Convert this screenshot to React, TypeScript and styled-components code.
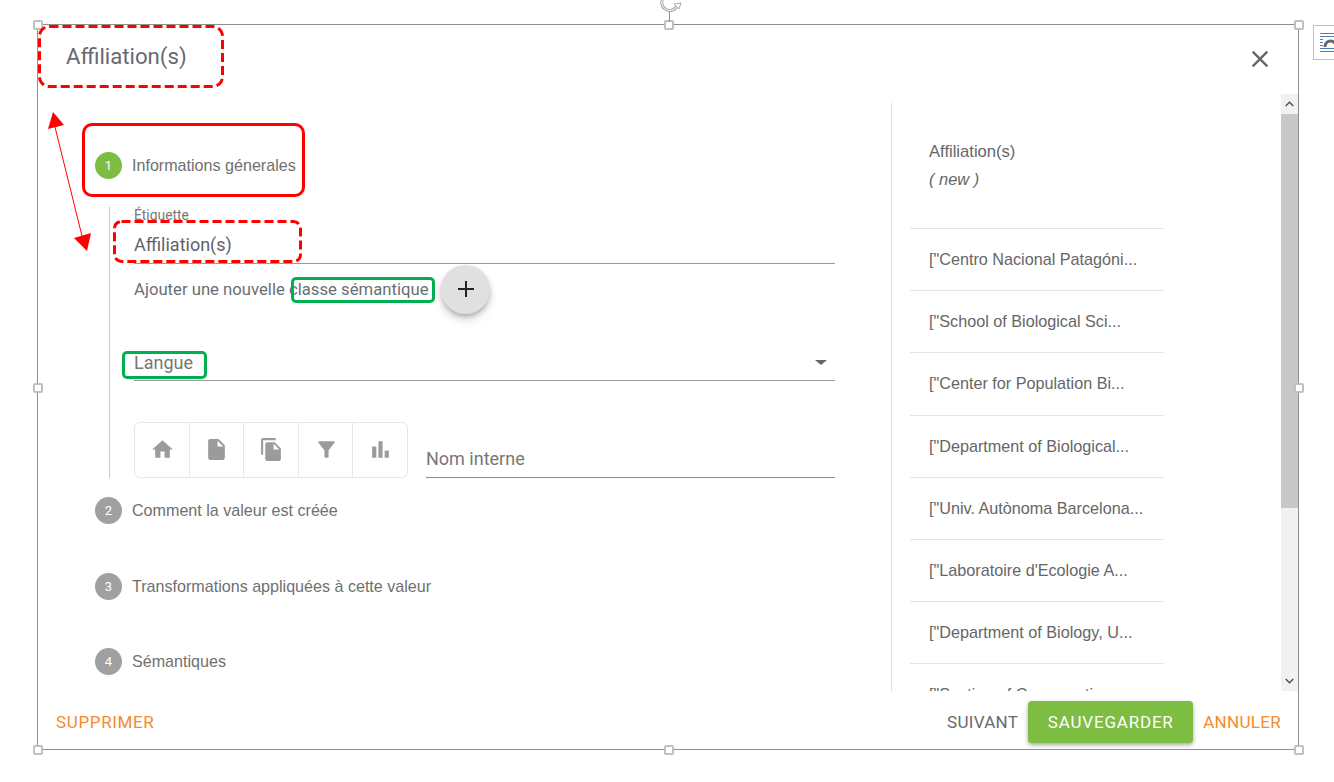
import React from 'react';
import { MdBarChart, MdClose, MdFileCopy, MdFilterAlt, MdHome, MdInsertDriveFile, MdKeyboardArrowDown, MdKeyboardArrowUp } from 'react-icons/md';
import styled, { createGlobalStyle } from 'styled-components';

const GlobalStyle = createGlobalStyle`
  html, body {
    margin: 0;
    background: #fff;
    overflow: hidden;
  }
  * {
    box-sizing: border-box;
  }
`;

const Page = styled.div`
  position: relative;
  width: 1334px;
  height: 782px;
  padding: 24px 0 0 37px;
  overflow: hidden;
  font-family: Roboto, "Liberation Sans", sans-serif;
  color: #666;
`;

const Frame = styled.div`
  position: relative;
  display: flex;
  flex-direction: column;
  width: 1262px;
  height: 726px;
  border: 1px solid #8e8e8e;
`;

const Header = styled.header`
  display: flex;
  justify-content: space-between;
  align-items: center;
  height: 69px;
  padding: 0 24px 8px 28px;
`;

const Title = styled.h2`
  margin: 0;
  font-size: 22.2px;
  font-weight: 400;
  color: #666a70;
`;

const CloseButton = styled.span`
  display: flex;
  margin-top: 7px;
  font-size: 28px;
  color: #666;
`;

const Body = styled.div`
  flex: 1;
  display: flex;
  min-height: 0;
  overflow: hidden;
`;

const Form = styled.div`
  width: 853px;
  flex-shrink: 0;
  padding: 58px 56px 0 57px;
`;

const Step = styled.div<{ $top?: number }>`
  display: flex;
  align-items: center;
  gap: 10px;
  height: 27px;
  margin-top: ${p => p.$top ?? 0}px;
  font-family: "Liberation Sans", Arial, sans-serif;
  font-size: 16.1px;
  color: #707070;
`;

const StepNumber = styled.span<{ $active?: boolean }>`
  display: flex;
  justify-content: center;
  align-items: center;
  width: 27px;
  height: 27px;
  border-radius: 50%;
  background: ${p => (p.$active ? '#7cbd42' : '#a0a0a0')};
  color: #fff;
  font-family: Roboto, sans-serif;
  font-size: 13px;
`;

const StepContent = styled.div`
  margin: 28px 0 0 14px;
  padding-left: 24px;
  border-left: 1px solid #c8c8c8;
`;

const TextField = styled.div`
  position: relative;
  height: 57px;
  border-bottom: 1px solid #9a9a9a;
`;

const FieldLabel = styled.label`
  display: block;
  font-size: 13.8px;
  line-height: 16px;
  color: #777;
`;

const FieldValue = styled.div`
  margin-top: 10px;
  font-size: 18px;
  line-height: 24px;
  color: #5f6368;
`;

const AddRow = styled.div`
  display: flex;
  align-items: center;
  gap: 13px;
  height: 50px;
  font-size: 16.7px;
  color: #6b6f75;
`;

const AddButton = styled.button`
  display: flex;
  justify-content: center;
  align-items: center;
  width: 49px;
  height: 49px;
  padding: 0;
  border: 0;
  border-radius: 50%;
  background: #e0e0e0;
  box-shadow: 0 3px 5px -1px rgba(0, 0, 0, 0.25), 0 6px 10px rgba(0, 0, 0, 0.14);
  color: #222;
`;

const SelectField = styled.div`
  display: flex;
  justify-content: space-between;
  align-items: center;
  height: 67px;
  padding-top: 31px;
  border-bottom: 1px solid #9a9a9a;
  font-size: 18px;
  color: #777;
`;

const SelectArrow = styled.span`
  width: 0;
  height: 0;
  margin-right: 8px;
  border-left: 6px solid transparent;
  border-right: 6px solid transparent;
  border-top: 5px solid #666;
`;

const ToolRow = styled.div`
  display: flex;
  gap: 18px;
  margin-top: 41px;
`;

const ToolGroup = styled.div`
  display: flex;
  width: 274px;
  height: 56px;
  border: 1px solid #e6e6e6;
  border-radius: 6px;
`;

const ToolCell = styled.span`
  flex: 1;
  display: flex;
  justify-content: center;
  align-items: center;
  padding: 0 0 2px 1px;
  font-size: 25px;
  color: #9b9b9b;

  & + & {
    border-left: 1px solid #e6e6e6;
  }
`;

const InternalName = styled.div`
  flex: 1;
  display: flex;
  align-items: flex-end;
  padding-bottom: 8px;
  border-bottom: 1px solid #8a8a8a;
  font-size: 18px;
  color: #777;
`;

const Preview = styled.aside`
  width: 390px;
  flex-shrink: 0;
  margin-top: 9px;
  padding-left: 18px;
  border-left: 1px solid #e0e0e0;
  font-family: "Liberation Sans", Arial, sans-serif;
`;

const PreviewHead = styled.div`
  width: 254px;
  height: 125px;
  padding: 35px 0 0 19px;
  font-size: 16.6px;
  line-height: 28px;
  color: #666;
`;

const PreviewNew = styled.div`
  margin-top: -1px;
  font-size: 16.4px;
  font-style: italic;
`;

const PreviewRow = styled.div`
  display: flex;
  align-items: center;
  width: 254px;
  height: 62.2px;
  padding-left: 19px;
  border-top: 1px solid #e4e4e4;
  font-size: 16.2px;
  color: #666;
  white-space: nowrap;
`;

const Scrollbar = styled.div`
  display: flex;
  flex-direction: column;
  width: 17px;
  flex-shrink: 0;
  background: #f1f1f1;
`;

const ScrollArrow = styled.span`
  display: flex;
  justify-content: center;
  align-items: center;
  height: 20px;
  font-size: 22px;
  color: #505050;
`;

const ScrollThumb = styled.div`
  height: 394px;
  background: #c8c8c8;
`;

const ScrollSpace = styled.div`
  flex: 1;
`;

const Footer = styled.footer`
  display: flex;
  align-items: flex-start;
  height: 58px;
  padding: 10px 17px 0 18px;
`;

const TextButton = styled.span<{ $accent?: boolean; $tight?: boolean }>`
  display: flex;
  align-items: center;
  height: 42px;
  font-size: 17px;
  letter-spacing: ${p => (p.$tight ? 0.3 : 0.65)}px;
  color: ${p => (p.$accent ? '#f58a2e' : '#666a70')};
`;

const FooterActions = styled.div`
  display: flex;
  align-items: flex-start;
  gap: 10px;
  margin-left: auto;
`;

const SaveButton = styled.button`
  width: 165px;
  height: 42px;
  padding: 0;
  border: 0;
  border-radius: 4px;
  background: #7cbd42;
  box-shadow: 0 2px 4px rgba(0, 0, 0, 0.35);
  color: #fff;
  font-family: inherit;
  font-size: 17px;
  letter-spacing: 0.8px;
`;

const Handle = styled.span<{ $x: number; $y: number }>`
  position: absolute;
  left: calc(${p => p.$x}% + ${p => p.$x / 100}px);
  top: calc(${p => p.$y}% + ${p => p.$y / 100}px);
  width: 10px;
  height: 10px;
  margin: -5px 0 0 -5px;
  border: 2px solid #c0c0c0;
  border-radius: 2px;
  background: #fff;
`;

const Callout = styled.div`
  position: absolute;
  border: 3px solid #ff0000;
  border-radius: 10px;
  pointer-events: none;
`;

const StepCallout = styled(Callout)`
  left: 82px;
  top: 123px;
  width: 223px;
  height: 74px;
`;

const GreenCallout = styled(Callout)`
  border-color: #00b050;
  border-radius: 5px;
`;

const ClassCallout = styled(GreenCallout)`
  left: 291px;
  top: 277px;
  width: 144px;
  height: 26px;
`;

const LangCallout = styled(GreenCallout)`
  left: 122px;
  top: 351px;
  width: 85px;
  height: 28px;
`;

const DashedOutline = styled.svg<{ $left: number; $top: number }>`
  position: absolute;
  left: ${p => p.$left}px;
  top: ${p => p.$top}px;
  pointer-events: none;
`;

const ArrowLayer = styled.svg`
  position: absolute;
  left: 40px;
  top: 105px;
`;

const RotateIcon = styled.svg`
  position: absolute;
  left: 655px;
  top: 0;
`;

const LayoutBadge = styled.div`
  position: absolute;
  left: 1313px;
  top: 25px;
  width: 40px;
  height: 35px;
  border: 1px solid #c0c0c0;
  background: #fff;
`;

const steps = [
  { n: 2, label: 'Comment la valeur est créée', top: 19 },
  { n: 3, label: 'Transformations appliquées à cette valeur', top: 49 },
  { n: 4, label: 'Sémantiques', top: 48 }
];

const rows = [
  '["Centro Nacional Patagóni...',
  '["School of Biological Sci...',
  '["Center for Population Bi...',
  '["Department of Biological...',
  '["Univ. Autònoma Barcelona...',
  '["Laboratoire d\'Ecologie A...',
  '["Department of Biology, U...',
  '["Section of Conservati...'
];

const handles = [
  [0, 0], [50, 0], [100, 0],
  [0, 50], [100, 50],
  [0, 100], [50, 100], [100, 100]
];

const Dashed = ({ left, top, width, height, radius }: { left: number; top: number; width: number; height: number; radius: number }) => (
  <DashedOutline $left={left} $top={top} width={width} height={height}>
    <rect
      x="1.5"
      y="1.5"
      width={width - 3}
      height={height - 3}
      rx={radius}
      fill="none"
      stroke="#ff0000"
      strokeWidth="3"
      strokeDasharray="9 4"
    />
  </DashedOutline>
);

const App = () => (
  <Page>
    <GlobalStyle />
    <Frame>
      <Header>
        <Title>Affiliation(s)</Title>
        <CloseButton><MdClose /></CloseButton>
      </Header>
      <Body>
        <Form>
          <Step>
            <StepNumber $active>1</StepNumber>
            Informations génerales
          </Step>
          <StepContent>
            <TextField>
              <FieldLabel>Étiquette</FieldLabel>
              <FieldValue>Affiliation(s)</FieldValue>
            </TextField>
            <AddRow>
              <span>Ajouter une nouvelle classe sémantique</span>
              <AddButton>
                <svg width="18" height="18" viewBox="0 0 18 18">
                  <path d="M9 1v16M1 9h16" stroke="currentColor" strokeWidth="2" />
                </svg>
              </AddButton>
            </AddRow>
            <SelectField>
              Langue
              <SelectArrow />
            </SelectField>
            <ToolRow>
              <ToolGroup>
                <ToolCell><MdHome /></ToolCell>
                <ToolCell><MdInsertDriveFile /></ToolCell>
                <ToolCell><MdFileCopy /></ToolCell>
                <ToolCell><MdFilterAlt /></ToolCell>
                <ToolCell><MdBarChart /></ToolCell>
              </ToolGroup>
              <InternalName>Nom interne</InternalName>
            </ToolRow>
          </StepContent>
          {steps.map(s => (
            <Step key={s.n} $top={s.top}>
              <StepNumber>{s.n}</StepNumber>
              {s.label}
            </Step>
          ))}
        </Form>
        <Preview>
          <PreviewHead>
            Affiliation(s)
            <PreviewNew>( new )</PreviewNew>
          </PreviewHead>
          {rows.map(r => (
            <PreviewRow key={r}>{r}</PreviewRow>
          ))}
        </Preview>
        <Scrollbar>
          <ScrollArrow><MdKeyboardArrowUp /></ScrollArrow>
          <ScrollThumb />
          <ScrollSpace />
          <ScrollArrow><MdKeyboardArrowDown /></ScrollArrow>
        </Scrollbar>
      </Body>
      <Footer>
        <TextButton $accent>SUPPRIMER</TextButton>
        <FooterActions>
          <TextButton $tight>SUIVANT</TextButton>
          <SaveButton>SAUVEGARDER</SaveButton>
          <TextButton $accent $tight>ANNULER</TextButton>
        </FooterActions>
      </Footer>
      {handles.map(([x, y]) => (
        <Handle key={`${x}-${y}`} $x={x} $y={y} />
      ))}
    </Frame>
    <Dashed left={38} top={25} width={186} height={63} radius={10} />
    <Dashed left={113} top={220} width={189} height={43} radius={7} />
    <StepCallout />
    <ClassCallout />
    <LangCallout />
    <ArrowLayer width="60" height="150" viewBox="0 0 60 150">
      <path d="M15 22L42 131" stroke="#ff0000" strokeWidth="1" />
      <path d="M13 7L8 24L24 20Z" fill="#ff0000" />
      <path d="M47 146L34 133L51 128Z" fill="#ff0000" />
    </ArrowLayer>
    <RotateIcon width="30" height="26" viewBox="0 0 30 26">
      <path d="M14.5 12V22" stroke="#909090" strokeWidth="1" />
      <path d="M9 -3A8 8 0 1 0 22 6" fill="none" stroke="#aaa" strokeWidth="3" />
      <path d="M9 -3A8 8 0 1 0 22 6" fill="none" stroke="#fff" strokeWidth="1" />
      <path d="M19 4L26 3L24 9Z" fill="#fff" stroke="#aaa" strokeWidth="1" />
    </RotateIcon>
    <LayoutBadge>
      <svg width="38" height="33" viewBox="0 0 38 33">
        <path d="M6 7.5H24M6 10.5H24M6 13.5H9M6 16.5H9M6 19.5H9M6 22.5H24M6 25.5H24" stroke="#4a7ebb" strokeWidth="1" />
        <path d="M11 21C11 13 22 13 22 21" fill="none" stroke="#666" strokeWidth="3" />
      </svg>
    </LayoutBadge>
  </Page>
);

export default App;
